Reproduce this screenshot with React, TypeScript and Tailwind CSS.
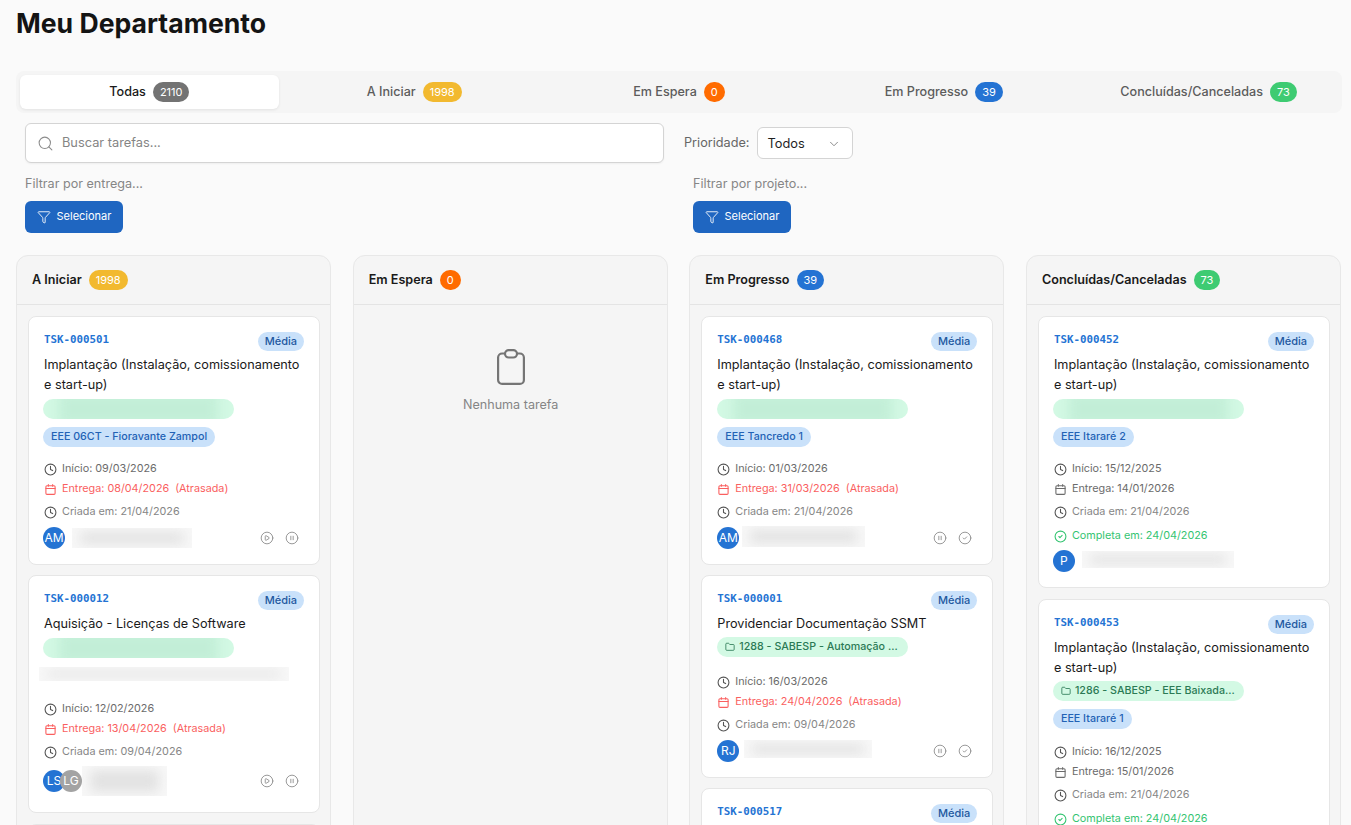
import React from "react";
import { Search, Funnel, ChevronDown, Clock, CirclePlay, CirclePause, CircleCheck, Folder } from "lucide-react";

function CalendarIcon({ className }: { className?: string }) {
  return (
    <svg viewBox="0 0 24 24" fill="none" stroke="currentColor" strokeWidth="2" strokeLinecap="round" strokeLinejoin="round" className={className}>
      <rect x="3.5" y="5" width="17" height="16" rx="2" />
      <path d="M8 3v3M16 3v3M3.5 10h17" />
    </svg>
  );
}

function EmptyClipboard({ className }: { className?: string }) {
  return (
    <svg viewBox="0 0 28 36" fill="none" stroke="currentColor" strokeWidth="2.2" className={className}>
      <rect x="1.1" y="4.5" width="25.8" height="30.4" rx="4" />
      <rect x="8" y="1.1" width="12" height="7.4" rx="3.7" fill="#f5f5f5" />
    </svg>
  );
}

function Badge({ n, color }: { n: string; color: string }) {
  return (
    <span className={`inline-flex h-5 min-w-5 items-center justify-center rounded-full px-[7px] text-[11px] font-normal leading-none text-white ${color}`}>{n}</span>
  );
}

function Tab({ label, n, color, active }: { label: string; n: string; color: string; active?: boolean }) {
  return (
    <div className={`flex h-[34px] flex-1 items-center justify-center gap-[7px] rounded-md text-[12.6px] font-medium ${active ? "bg-white text-[#1a1a1a] shadow-[0_1px_3px_rgba(0,0,0,0.08)]" : "text-[#5c5c5c]"}`}>
      <span>{label}</span>
      <Badge n={n} color={color} />
    </div>
  );
}

function FilterBlock({ label }: { label: string }) {
  return (
    <div>
      <div className="text-[12.6px] leading-5 text-[#868686]">{label}</div>
      <button className="mt-[7px] flex h-8 w-[98px] items-center justify-center gap-[6px] rounded-md bg-[#1f66c1] pb-[1px] text-[11px] font-normal text-white">
        <Funnel className="h-[14px] w-[14px]" strokeWidth={1.5} />
        Selecionar
      </button>
    </div>
  );
}

function BlurGreen() {
  return (
    <div className="relative h-5 w-[191px] overflow-hidden rounded-full bg-[#d3f9e4]">
      <div className="absolute inset-x-4 inset-y-[-6px] bg-[#c2eed7] blur-[6px]" />
    </div>
  );
}

function BluePill({ text }: { text: string }) {
  return <div className="w-fit whitespace-nowrap rounded-full bg-[#c9e1fa] px-2 text-[10.7px] font-medium leading-5 text-[#2262b5]">{text}</div>;
}

function FolderPill({ text }: { text: string }) {
  return (
    <div className="flex h-5 w-[191px] items-center gap-[4px] whitespace-nowrap rounded-full bg-[#d3f9e4] pl-2 text-[10.7px] font-medium text-[#2b7a55]">
      <Folder className="h-[10px] w-[10px] shrink-0" strokeWidth={2} />
      <span>{text}</span>
    </div>
  );
}

function DateRow({ icon, text, tone, className = "" }: { icon: "clock" | "cal" | "check"; text: React.ReactNode; tone: string; className?: string }) {
  const ic = "h-[13px] w-[13px] shrink-0";
  return (
    <div className={`flex h-5 items-center gap-[5px] whitespace-nowrap text-[10.8px] ${tone} ${className}`}>
      {icon === "clock" && <Clock className={`${ic} text-[#555555]`} strokeWidth={2} />}
      {icon === "cal" && <CalendarIcon className={ic} />}
      {icon === "check" && <CircleCheck className={ic} strokeWidth={2} />}
      <span>{text}</span>
    </div>
  );
}

function Avatar({ t, gray, className = "" }: { t: string; gray?: boolean; className?: string }) {
  return (
    <div className={`flex h-[22px] w-[22px] shrink-0 items-center justify-center overflow-hidden rounded-full text-[12px] font-normal leading-none text-white ${gray ? "bg-[#a3a3a3]" : "bg-[#2473d3]"} ${className}`}>{t}</div>
  );
}

function BlurGray({ className }: { className: string }) {
  return (
    <div className={`relative overflow-hidden bg-[#f8f8f8] ${className}`}>
      <div className="absolute inset-x-2 inset-y-1 bg-[#e2e2e2] blur-[6px]" />
    </div>
  );
}

type CardData = {
  id: string;
  title: string[];
  pills: React.ReactNode;
  datesClass: string;
  start: string;
  end: string;
  late?: boolean;
  created: string;
  done?: string;
  avatars: React.ReactNode;
  actions?: "start" | "progress";
  footClass: string;
  bottomClass?: string;
  className?: string;
  flush?: boolean;
};

function CardHead({ id }: { id: string }) {
  return (
    <div className="flex h-[34px] items-start justify-between pt-[15px]">
      <span className="pt-[1px] font-['DejaVu_Sans_Mono'] text-[10.8px] font-bold leading-[14px] text-[#2473d3]">{id}</span>
      <span className="rounded-full bg-[#c9e1fa] px-[7px] text-[11px] font-medium leading-[19px] text-[#22589f]">Média</span>
    </div>
  );
}

function Card({ c }: { c: CardData }) {
  const shift = c.flush ? "" : "-ml-[1px]";
  return (
    <div className={`shrink-0 rounded-lg border border-[#e6e6e6] bg-white px-[15px] ${c.className ?? ""}`}>
      <CardHead id={c.id} />
      <div className="mt-[4px] -mb-[1px] whitespace-nowrap text-[12.7px] leading-5 text-[#1a1a1a]">
        {c.title.map((t) => (
          <div key={t}>{t}</div>
        ))}
      </div>
      <div className={shift}>{c.pills}</div>
      <div className={c.datesClass}>
        <DateRow icon="clock" tone="text-[#6b6b6b]" text={`Início: ${c.start}`} />
        <DateRow
          icon="cal"
          tone={c.late ? "text-[#fa5f5f]" : "text-[#6b6b6b]"}
          text={
            <>
              Entrega: {c.end}
              {c.late && <span className="ml-[6px]">(Atrasada)</span>}
            </>
          }
        />
        <DateRow icon="clock" tone="text-[#868686]" className="mt-[3px]" text={`Criada em: ${c.created}`} />
        {c.done && <DateRow icon="check" tone="text-[#34c471]" className="mt-[4px]" text={`Completa em: ${c.done}`} />}
      </div>
      <div className={`flex h-[22px] items-center justify-between ${c.footClass}`}>
        <div className={`flex items-center ${shift}`}>{c.avatars}</div>
        {c.actions && (
          <div className="mr-[5px] flex items-center gap-[11px] text-[#8a8a8a]">
            {c.actions === "start" ? <CirclePlay className="h-[14px] w-[14px]" strokeWidth={1.5} /> : <CirclePause className="h-[14px] w-[14px]" strokeWidth={1.5} />}
            {c.actions === "start" ? <CirclePause className="h-[14px] w-[14px]" strokeWidth={1.5} /> : <CircleCheck className="h-[14px] w-[14px]" strokeWidth={1.5} />}
          </div>
        )}
      </div>
      <div className={c.bottomClass ?? "h-[15px]"} />
    </div>
  );
}

function CardTop({ id }: { id: string }) {
  return (
    <div className="h-[60px] shrink-0 rounded-lg border border-[#e6e6e6] bg-white px-[15px]">
      <CardHead id={id} />
    </div>
  );
}

function Column({ title, n, color, children }: { title: string; n: string; color: string; children?: React.ReactNode }) {
  return (
    <div className="flex flex-col overflow-hidden rounded-t-xl border border-[#e8e8e8] bg-[#f5f5f5]">
      <div className="flex h-[49px] shrink-0 items-center gap-[7px] border-b border-[#e4e4e4] pl-[15px]">
        <span className="text-[12.6px] font-semibold text-[#1a1a1a]">{title}</span>
        <Badge n={n} color={color} />
      </div>
      <div className="flex flex-col gap-[11px] pl-[11px] pr-[10px] pt-[11px]">{children}</div>
    </div>
  );
}

const implant = ["Implantação (Instalação, comissionamento", "e start-up)"];

export default function App() {
  return (
    <div className="h-[825px] overflow-hidden bg-[#fafafa] pl-4 pr-[9px] font-['Inter',sans-serif]">
      <h1 className="pt-[6px] text-[26.6px] font-bold leading-[34px] text-[#141414]">Meu Departamento</h1>

      <div className="mt-[31px] flex h-[42px] items-center gap-[6px] rounded-lg bg-[#f5f5f5] px-1">
        <Tab label="Todas" n="2110" color="bg-[#737373]" active />
        <Tab label="A Iniciar" n="1998" color="bg-[#f2b92f]" />
        <Tab label="Em Espera" n="0" color="bg-[#ff6b00]" />
        <Tab label="Em Progresso" n="39" color="bg-[#2473d3]" />
        <Tab label="Concluídas/Canceladas" n="73" color="bg-[#3ecb72]" />
      </div>

      <div className="mt-[10px] flex h-10 items-center pl-[9px]">
        <div className="flex h-10 w-[639px] items-center gap-2 rounded-md border border-[#d4d4d4] bg-white pl-[11px] text-[12.8px] text-[#858585] shadow-[0_1px_2px_rgba(0,0,0,0.05)]">
          <Search className="h-[17px] w-[17px] text-[#8c8c8c]" strokeWidth={1.5} />
          Buscar tarefas...
        </div>
        <span className="ml-5 text-[12.7px] text-[#666666]">Prioridade:</span>
        <div className="ml-[7px] flex h-8 w-[96px] items-center justify-between rounded-md border border-[#d4d4d4] bg-white pl-[10px] pr-[11px] pt-[1px] text-[12.8px] text-[#1f1f1f]">
          Todos
          <ChevronDown className="h-[14px] w-[14px] text-[#7a7a7a]" strokeWidth={1.5} />
        </div>
      </div>

      <div className="mt-[11px] grid grid-cols-[668px_1fr] pl-[9px]">
        <FilterBlock label="Filtrar por entrega..." />
        <FilterBlock label="Filtrar por projeto..." />
      </div>

      <div className="mt-[22px] mr-[1px] grid h-[640px] grid-cols-4 gap-[21.6px]">
        <Column title="A Iniciar" n="1998" color="bg-[#f2b92f]">
          <Card
            c={{
              id: "TSK-000501",
              className: "-mb-[1px]",
              title: implant,
              pills: (
                <div className="mt-[5px] flex flex-col gap-2">
                  <BlurGreen />
                  <BluePill text="EEE 06CT - Fioravante Zampol" />
                </div>
              ),
              datesClass: "mt-[12px]",
              start: "09/03/2026",
              end: "08/04/2026",
              late: true,
              created: "21/04/2026",
              footClass: "mt-[5px]",
              avatars: (
                <>
                  <Avatar t="AM" />
                  <BlurGray className="ml-[7px] h-5 w-[120px]" />
                </>
              ),
              actions: "start",
            }}
          />
          <Card
            c={{
              id: "TSK-000012",
              title: ["Aquisição - Licenças de Software"],
              pills: (
                <div className="mt-[5px] flex flex-col">
                  <BlurGreen />
                  <BlurGray className="-ml-1 mt-[9px] h-[14px] w-[250px]" />
                </div>
              ),
              datesClass: "mt-[18px]",
              start: "12/02/2026",
              end: "13/04/2026",
              late: true,
              created: "09/04/2026",
              footClass: "mt-[8px]",
              bottomClass: "h-[20px]",
              avatars: (
                <>
                  <Avatar t="LS" />
                  <Avatar t="LG" gray className="-ml-[5px]" />
                  <BlurGray className="-my-2 h-[30px] w-[85px]" />
                </>
              ),
              actions: "start",
            }}
          />
          <CardTop id="TSK-000500" />
        </Column>

        <Column title="Em Espera" n="0" color="bg-[#ff6b00]">
          <div className="flex flex-col items-center pt-[33px]">
            <EmptyClipboard className="h-9 w-7 text-[#757575]" />
            <span className="mt-[11px] text-[12.6px] text-[#858585]">Nenhuma tarefa</span>
          </div>
        </Column>

        <Column title="Em Progresso" n="39" color="bg-[#2473d3]">
          <Card
            c={{
              id: "TSK-000468",
              flush: true,
              className: "-mb-[1px]",
              title: implant,
              pills: (
                <div className="mt-[5px] flex flex-col gap-2">
                  <BlurGreen />
                  <BluePill text="EEE Tancredo 1" />
                </div>
              ),
              datesClass: "mt-[12px]",
              start: "01/03/2026",
              end: "31/03/2026",
              late: true,
              created: "21/04/2026",
              footClass: "mt-[5px]",
              avatars: (
                <>
                  <Avatar t="AM" />
                  <BlurGray className="-mt-[4px] ml-[3px] h-[21px] w-[123px]" />
                </>
              ),
              actions: "progress",
            }}
          />
          <Card
            c={{
              id: "TSK-000001",
              flush: true,
              className: "-mb-[1px]",
              title: ["Providenciar Documentação SSMT"],
              pills: (
                <div className="mt-[4px]">
                  <FolderPill text="1288 - SABESP - Automação ..." />
                </div>
              ),
              datesClass: "mt-[15px]",
              start: "16/03/2026",
              end: "24/04/2026",
              late: true,
              created: "09/04/2026",
              footClass: "mt-[5px]",
              avatars: (
                <>
                  <Avatar t="RJ" />
                  <BlurGray className="-mt-[4px] ml-[5px] h-[18px] w-[128px]" />
                </>
              ),
              actions: "progress",
            }}
          />
          <CardTop id="TSK-000517" />
        </Column>

        <Column title="Concluídas/Canceladas" n="73" color="bg-[#3ecb72]">
          <Card
            c={{
              id: "TSK-000452",
              title: implant,
              pills: (
                <div className="mt-[5px] flex flex-col gap-2">
                  <BlurGreen />
                  <BluePill text="EEE Itararé 2" />
                </div>
              ),
              datesClass: "mt-[12px]",
              start: "15/12/2025",
              end: "14/01/2026",
              created: "21/04/2026",
              done: "24/04/2026",
              footClass: "mt-[4px]",
              avatars: (
                <>
                  <Avatar t="P" />
                  <BlurGray className="-mt-[4px] ml-[7px] h-[17px] w-[152px]" />
                </>
              ),
            }}
          />
          <Card
            c={{
              id: "TSK-000453",
              title: implant,
              pills: (
                <div className="mt-[4px] flex flex-col gap-2">
                  <FolderPill text="1286 - SABESP - EEE Baixada..." />
                  <BluePill text="EEE Itararé 1" />
                </div>
              ),
              datesClass: "mt-[13px]",
              start: "16/12/2025",
              end: "15/01/2026",
              created: "21/04/2026",
              done: "24/04/2026",
              footClass: "mt-[4px]",
              avatars: <Avatar t="P" />,
            }}
          />
        </Column>
      </div>
    </div>
  );
}
